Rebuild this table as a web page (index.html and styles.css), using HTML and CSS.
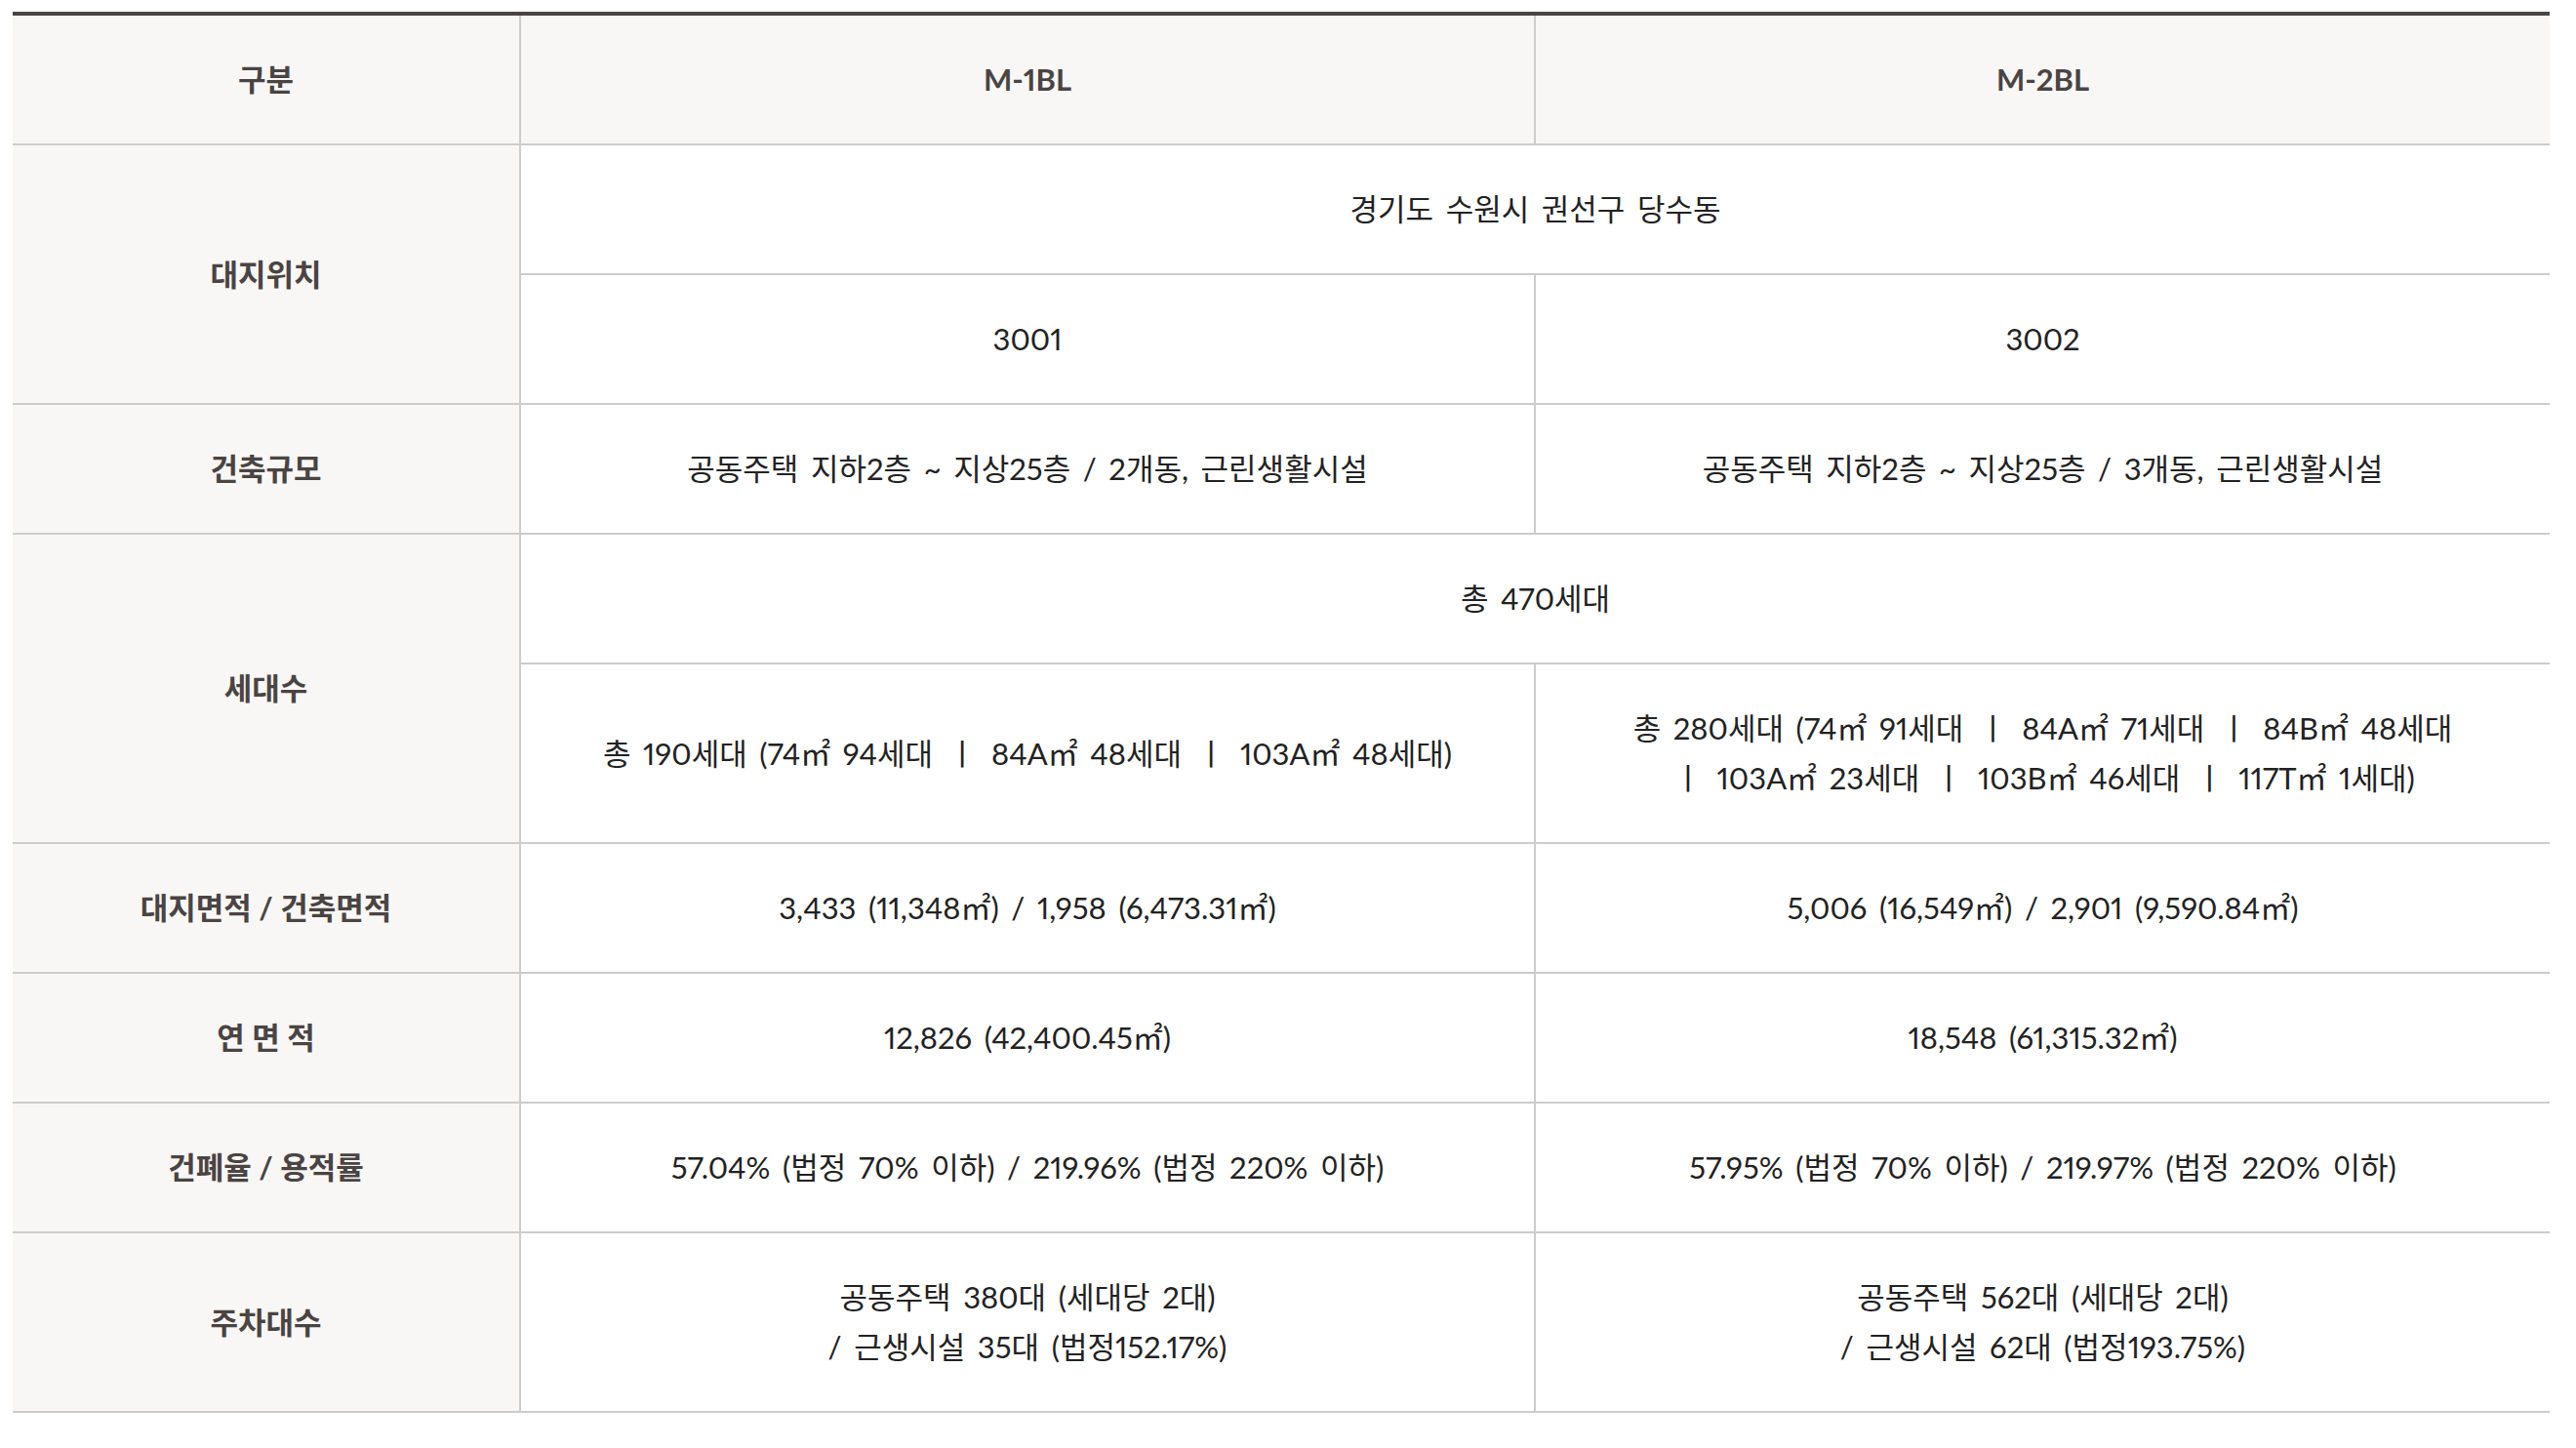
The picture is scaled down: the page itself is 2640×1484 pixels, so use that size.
FILE: index.html
```html
<!DOCTYPE html>
<html lang="ko">
<head>
<meta charset="utf-8">
<title>사업개요</title>
<link rel="stylesheet" href="styles.css">
</head>
<body>
<div class="wrap">
  <table class="spec">
    <colgroup>
      <col class="c-head">
      <col class="c-val">
      <col class="c-val">
    </colgroup>
    <thead>
      <tr>
        <th>구분</th>
        <th>M-1BL</th>
        <th>M-2BL</th>
      </tr>
    </thead>
    <tbody>
      <tr>
        <th rowspan="2">대지위치</th>
        <td colspan="2">경기도 수원시 권선구 당수동</td>
      </tr>
      <tr>
        <td>3001</td>
        <td>3002</td>
      </tr>
      <tr>
        <th>건축규모</th>
        <td>공동주택 지하2층 ~ 지상25층 / 2개동, 근린생활시설</td>
        <td>공동주택 지하2층 ~ 지상25층 / 3개동, 근린생활시설</td>
      </tr>
      <tr>
        <th rowspan="2">세대수</th>
        <td colspan="2">총 470세대</td>
      </tr>
      <tr>
        <td>총 190세대 (74㎡ 94세대 <span class="sep">ㅣ</span> 84A㎡ 48세대 <span class="sep">ㅣ</span> 103A㎡ 48세대)</td>
        <td>총 280세대 (74㎡ 91세대 <span class="sep">ㅣ</span> 84A㎡ 71세대 <span class="sep">ㅣ</span> 84B㎡ 48세대<br><span class="sep">ㅣ</span> 103A㎡ 23세대 <span class="sep">ㅣ</span> 103B㎡ 46세대 <span class="sep">ㅣ</span> 117T㎡ 1세대)</td>
      </tr>
      <tr>
        <th>대지면적 / 건축면적</th>
        <td>3,433 (11,348㎡) / 1,958 (6,473.31㎡)</td>
        <td>5,006 (16,549㎡) / 2,901 (9,590.84㎡)</td>
      </tr>
      <tr>
        <th>연 면 적</th>
        <td>12,826 (42,400.45㎡)</td>
        <td>18,548 (61,315.32㎡)</td>
      </tr>
      <tr>
        <th>건폐율 / 용적률</th>
        <td>57.04% (법정 70% 이하) / 219.96% (법정 220% 이하)</td>
        <td>57.95% (법정 70% 이하) / 219.97% (법정 220% 이하)</td>
      </tr>
      <tr>
        <th>주차대수</th>
        <td>공동주택 380대 (세대당 2대)<br>/ 근생시설 35대 (법정152.17%)</td>
        <td>공동주택 562대 (세대당 2대)<br>/ 근생시설 62대 (법정193.75%)</td>
      </tr>
    </tbody>
  </table>
</div>
</body>
</html>
```

FILE: styles.css
```css
html, body {
  margin: 0;
  padding: 0;
  background: #ffffff;
}

.wrap {
  padding: 12px 27px 37px 13px;
}

.spec {
  width: 2600px;
  table-layout: fixed;
  border-collapse: collapse;
  border-top: 4px solid #4a4443;
  font-family: Lato, "Noto Sans CJK KR", sans-serif;
  font-size: 31px;
  line-height: 51px;
  font-variant-numeric: proportional-nums;
  color: #222222;
}

.c-head { width: 520px; }
.c-val { width: 1040px; }

.spec th,
.spec td {
  padding: 40px 10px;
  text-align: center;
  vertical-align: middle;
  border: 2px solid #cccccc;
}

.spec tr > :first-child { border-left: 0; }
.spec tr > :last-child { border-right: 0; }
.spec thead th { border-top: 0; }

.spec th {
  background: #f8f7f5;
  color: #4a4443;
  font-weight: 700;
  letter-spacing: 0;
  word-spacing: 0;
}

.spec td {
  background: #ffffff;
  font-weight: 400;
  letter-spacing: 0;
  word-spacing: 0.15em;
}

.sep {
  padding: 0 0.1em;
}
```
